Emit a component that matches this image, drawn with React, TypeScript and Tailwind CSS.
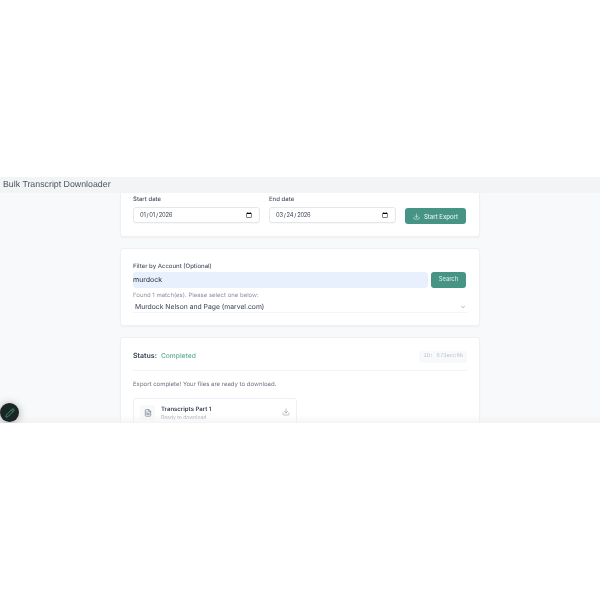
import { ChevronDown, Download, FileText, Pencil } from "lucide-react";

const font = { fontFamily: "Inter, sans-serif", textRendering: "geometricPrecision" as const };

function Card({ className, children }: { className: string; children: React.ReactNode }) {
  return (
    <section className={`w-[360px] mx-auto bg-white border border-[#eef0f3] shadow-[0_1px_2px_rgba(0,0,0,0.04)] ${className}`}>
      {children}
    </section>
  );
}

function DateField({ label, value, width }: { label: string; value: string; width: string }) {
  return (
    <div className={width}>
      <label className="block text-[6px] leading-[10px] font-medium text-[#4b5563] mb-[2px]">{label}</label>
      <input
        type="date"
        defaultValue={value}
        className="block w-full h-4 text-[5.8px] tracking-[-0.25px] text-[#374151] bg-white border border-[#e5e7eb] rounded-[3px] px-[5px] shadow-[0_1px_1px_rgba(0,0,0,0.03)]"
      />
    </div>
  );
}

export default function App() {
  return (
    <div className="w-[600px] h-[600px] bg-white overflow-hidden" style={font}>
      <div className="h-[177px]" />
      <div className="relative h-[246px] overflow-hidden bg-[#f8f9fb] blur-[0.4px]">
        <header className="h-4 bg-[#f3f4f6] px-[3px] flex items-center">
          <h1 className="text-[8.8px] text-[#4b5563]" style={{ fontFamily: "'Liberation Sans', sans-serif" }}>Bulk Transcript Downloader</h1>
        </header>

        <Card className="h-[44px] border-t-0 rounded-b-[3px] px-[12px] pt-[2px] flex items-start gap-[9px]">
          <DateField label="Start date" value="2026-01-01" width="w-[127px]" />
          <DateField label="End date" value="2026-03-24" width="w-[127px]" />
          <button className="mt-[13px] w-[61px] h-[16px] bg-[#459485] rounded-[3px] flex items-center justify-center gap-[4px] text-[6px] font-medium text-[#e3f0ed]">
            <Download size={7} strokeWidth={2} />
            Start Export
          </button>
        </Card>

        <Card className="mt-[11px] h-[78px] rounded-[3px] px-[12px] pt-[12.5px]">
          <label className="block text-[6px] leading-[10px] font-medium text-[#4b5563]">Filter by Account (Optional)</label>
          <div className="flex gap-[3px]">
            <div className="w-[295px] h-4 pt-[1px] bg-[#e8f0fe] rounded-[3px] flex items-center text-[7px] text-[#1f2937]">murdock</div>
            <button className="w-[35px] h-4 bg-[#459485] rounded-[3px] text-[5.75px] font-medium text-[#d5e8e4]">Search</button>
          </div>
          <p className="mt-[3px] text-[6px] leading-[10px] text-[#8b929e]">Found 1 match(es). Please select one below:</p>
          <div className="h-[12.5px] pt-[2px] pl-[2px] pr-[1px] flex items-center justify-between border-b border-[#f3f4f6] text-[6.8px] text-[#374151]">
            <span>Murdock Nelson and Page (marvel.com)</span>
            <ChevronDown size={6} className="text-[#6b7280]" />
          </div>
        </Card>

        <Card className="mt-[11px] h-[120px] rounded-[3px] px-[12px] pt-[12.5px]">
          <div className="h-[19.5px] pb-[2px] flex items-start justify-between">
            <div className="flex items-center h-[12px] gap-[4px] text-[7px]">
              <span className="font-semibold text-[#374151]">Status:</span>
              <span className="font-medium text-[6.7px] text-[#5fae98]">Completed</span>
            </div>
            <span className="h-[12px] px-1 flex items-center rounded-[2px] bg-[#f8f9fb] text-[5.5px] text-[#b9bec7]" style={{ fontFamily: "'Liberation Mono', monospace" }}>ID: 673ecc6b</span>
          </div>
          <div className="border-t border-[#f3f4f6]" />
          <p className="mt-[8.5px] text-[6px] leading-[10px] text-[#6b7280]">Export complete! Your files are ready to download.</p>
          <div className="mt-[8.5px] w-[164px] h-[40px] border border-[#eef0f3] rounded-[3px] px-[6px] pt-[6px] flex items-start justify-between">
            <div className="flex gap-[6px]">
              <div className="w-[15px] h-[15px] rounded-[2px] bg-[#f8f9fb] flex items-center justify-center text-[#6b7280]">
                <FileText size={8} />
              </div>
              <div className="pt-[1px]">
                <div className="text-[6px] leading-[8px] font-semibold text-[#374151]">Transcripts Part 1</div>
                <div className="text-[5px] leading-[8px] text-[#9ca3af]">Ready to download</div>
              </div>
            </div>
            <Download size={8} className="mt-[3px] text-[#9ca3af]" />
          </div>
        </Card>

        <div className="absolute inset-x-0 bottom-0 h-[8px] bg-gradient-to-b from-transparent to-[#f0f0f0]/70" />
        <button className="absolute left-0 top-[226px] w-[19px] h-[19px] rounded-full bg-[#1c2526] shadow-[0_1px_8px_rgba(0,0,0,0.35)] flex items-center justify-center text-[#35a86c]">
          <Pencil size={10} />
        </button>
      </div>
    </div>
  );
}
